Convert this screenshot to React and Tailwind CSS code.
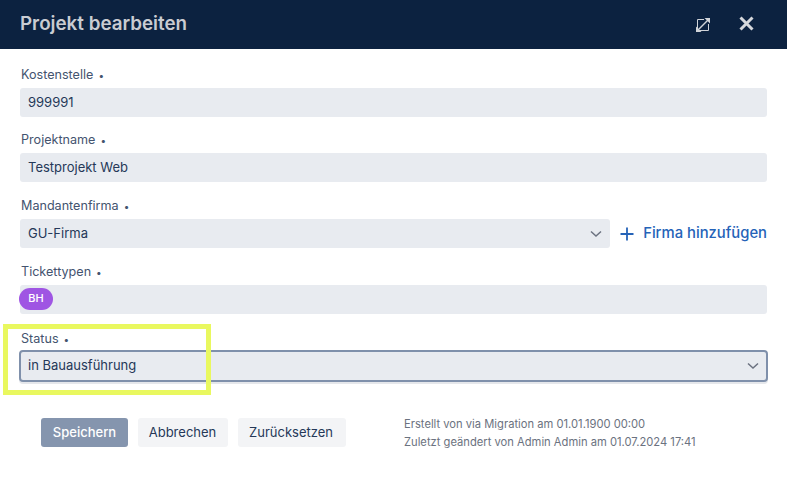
const inter = { fontFamily: '"Inter", "Noto Sans", sans-serif' };

function Chevron() {
  return (
    <svg width="12" height="8" viewBox="0 0 12 8" fill="none" stroke="#6b7280" strokeWidth="1.5" className="shrink-0">
      <path d="M1 1.5 L6 6 L11 1.5" />
    </svg>
  );
}

function Field({ label, labelClass = "mb-[4px] h-[18px]", children }) {
  return (
    <div className="flex flex-col">
      <label className={`flex items-center pl-px text-[12.6px] leading-5 text-[#44546f] ${labelClass}`}>
        {label}
        <span className="ml-[5px] text-[10px] text-[#44546f]">•</span>
      </label>
      {children}
    </div>
  );
}

function Input({ children }) {
  return (
    <div className="flex h-[29px] items-center rounded-[3px] bg-[#e8ebf0] px-2 text-[13px] text-[#253858]">
      {children}
    </div>
  );
}

function Select({ children }) {
  return (
    <div className="flex h-[29px] flex-1 items-center justify-between rounded-[3px] bg-[#e8ebf0] pl-2 pr-[8px] text-[13px] text-[#253858]">
      {children}
      <Chevron />
    </div>
  );
}

export default function App() {
  return (
    <div style={inter} className="relative h-[480px] w-[787px] overflow-hidden bg-white">
      <header className="flex h-[49px] items-center justify-between bg-[#0c2240] pb-[2px] pl-5 pr-[33px]">
        <h1 className="mt-[2px] text-[18.8px] font-semibold text-[#c9ccd2]">Projekt bearbeiten</h1>
        <div className="flex items-center gap-[28px]">
          <svg width="16" height="16" viewBox="0 0 16 16" fill="none" className="mt-[2px] text-[#d0d3d8]">
            <path d="M9 2.5 H2.5 V13.5 H13.5 V7" stroke="currentColor" strokeWidth="1" />
            <path d="M1.5 14.5 L14.5 1.5" stroke="currentColor" strokeWidth="1.5" />
            <path d="M9.5 1 H15 V6.5 Z" fill="currentColor" />
            <path d="M1 9.5 V15 H6.5 Z" fill="currentColor" />
          </svg>
          <svg width="15" height="15" viewBox="0 0 15 15" fill="none" stroke="#d6d8dc" strokeWidth="3">
            <path d="M1.5 1.5 L13.5 13.5 M13.5 1.5 L1.5 13.5" />
          </svg>
        </div>
      </header>

      <main className="flex flex-col gap-[14.6px] pl-5 pr-5 pt-[16.85px]">
        <Field label="Kostenstelle">
          <Input>999991</Input>
        </Field>
        <Field label="Projektname">
          <Input>Testprojekt Web</Input>
        </Field>
        <Field label="Mandantenfirma">
          <div className="flex items-center gap-[10px]">
            <Select>GU-Firma</Select>
            <button className="flex items-center gap-[9px] text-[14.8px] font-medium text-[#2563b8]">
              <svg width="14" height="14" viewBox="0 0 14 14" stroke="currentColor" strokeWidth="1.8">
                <path d="M7 0.5 V13.5 M0.5 7 H13.5" />
              </svg>
              Firma hinzufügen
            </button>
          </div>
        </Field>
        <Field label="Tickettypen">
          <div className="flex h-[29px] items-start rounded-[3px] bg-[#e8ebf0] pt-[3px]">
            <span className="-ml-px flex h-[22px] w-[34px] items-center justify-center rounded-full bg-[#9f55e3] text-[11px] font-medium text-white">
              BH
            </span>
          </div>
        </Field>
        <Field label="Status" labelClass="mb-[1px] h-[21px]">
          <div className="-mx-px flex h-[32px] items-center justify-between rounded-[4px] border-2 border-[#7f90ab] bg-[#e8ebf0] pl-[7px] pr-[7px] text-[13px] text-[#253858] shadow-[0_2px_0_#e5e7eb]">
            in Bauausführung
            <Chevron />
          </div>
        </Field>

        <footer className="mt-[18px] flex items-center pl-[21px]">
          <button className="h-[29px] w-[87px] rounded-[3px] bg-[#8595ae] text-[13px] font-medium text-white">
            Speichern
          </button>
          <button className="ml-[10px] h-[29px] w-[90px] rounded-[3px] bg-[#f3f4f6] pr-px text-[13px] text-[#253858]">
            Abbrechen
          </button>
          <button className="ml-[10px] h-[29px] w-[108px] rounded-[3px] bg-[#f3f4f6] pr-[2px] text-[13px] text-[#253858]">
            Zurücksetzen
          </button>
          <div className="ml-[58px] text-[11.2px] leading-[18px] text-[#6b7280]">
            <p>Erstellt von via Migration am 01.01.1900 00:00</p>
            <p>Zuletzt geändert von Admin Admin am 01.07.2024 17:41</p>
          </div>
        </footer>
      </main>

      <div className="pointer-events-none absolute left-[3px] top-[324px] h-[71px] w-[208px] border-[5px] border-[#e9f85f]" />
    </div>
  );
}
